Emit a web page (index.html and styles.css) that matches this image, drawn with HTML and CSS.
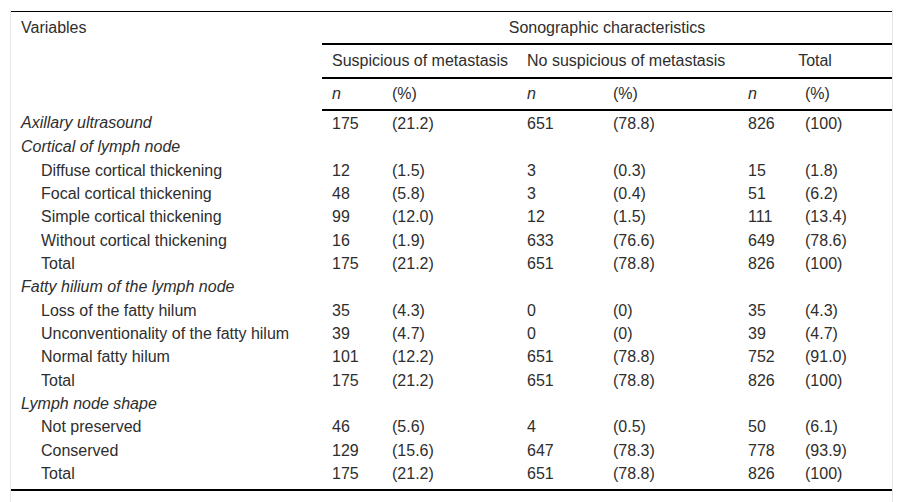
FILE: index.html
```html
<!DOCTYPE html>
<html>
<head>
<meta charset="utf-8">
<link rel="stylesheet" href="styles.css">
</head>
<body>
<div class="wrap">
<table class="tbl">
<colgroup>
<col class="c1"><col class="c2"><col class="c3"><col class="c4"><col class="c5"><col class="c6"><col class="c7">
</colgroup>
<thead>
<tr class="h1">
<th rowspan="3" class="var">Variables</th>
<th colspan="6" class="center line">Sonographic characteristics</th>
</tr>
<tr class="h2">
<th colspan="2" class="line">Suspicious of metastasis</th>
<th colspan="2" class="line">No suspicious of metastasis</th>
<th colspan="2" class="center line">Total</th>
</tr>
<tr class="h3">
<th class="it">n</th><th>(%)</th>
<th class="it">n</th><th>(%)</th>
<th class="it">n</th><th>(%)</th>
</tr>
</thead>
<tbody>
<tr class="first"><td class="it">Axillary ultrasound</td><td>175</td><td>(21.2)</td><td>651</td><td>(78.8)</td><td>826</td><td>(100)</td></tr>
<tr><td class="it">Cortical of lymph node</td><td></td><td></td><td></td><td></td><td></td><td></td></tr>
<tr><td class="sub">Diffuse cortical thickening</td><td>12</td><td>(1.5)</td><td>3</td><td>(0.3)</td><td>15</td><td>(1.8)</td></tr>
<tr><td class="sub">Focal cortical thickening</td><td>48</td><td>(5.8)</td><td>3</td><td>(0.4)</td><td>51</td><td>(6.2)</td></tr>
<tr><td class="sub">Simple cortical thickening</td><td>99</td><td>(12.0)</td><td>12</td><td>(1.5)</td><td>111</td><td>(13.4)</td></tr>
<tr><td class="sub">Without cortical thickening</td><td>16</td><td>(1.9)</td><td>633</td><td>(76.6)</td><td>649</td><td>(78.6)</td></tr>
<tr><td class="sub">Total</td><td>175</td><td>(21.2)</td><td>651</td><td>(78.8)</td><td>826</td><td>(100)</td></tr>
<tr><td class="it">Fatty hilium of the lymph node</td><td></td><td></td><td></td><td></td><td></td><td></td></tr>
<tr><td class="sub">Loss of the fatty hilum</td><td>35</td><td>(4.3)</td><td>0</td><td>(0)</td><td>35</td><td>(4.3)</td></tr>
<tr><td class="sub">Unconventionality of the fatty hilum</td><td>39</td><td>(4.7)</td><td>0</td><td>(0)</td><td>39</td><td>(4.7)</td></tr>
<tr><td class="sub">Normal fatty hilum</td><td>101</td><td>(12.2)</td><td>651</td><td>(78.8)</td><td>752</td><td>(91.0)</td></tr>
<tr><td class="sub">Total</td><td>175</td><td>(21.2)</td><td>651</td><td>(78.8)</td><td>826</td><td>(100)</td></tr>
<tr><td class="it">Lymph node shape</td><td></td><td></td><td></td><td></td><td></td><td></td></tr>
<tr><td class="sub">Not preserved</td><td>46</td><td>(5.6)</td><td>4</td><td>(0.5)</td><td>50</td><td>(6.1)</td></tr>
<tr><td class="sub">Conserved</td><td>129</td><td>(15.6)</td><td>647</td><td>(78.3)</td><td>778</td><td>(93.9)</td></tr>
<tr class="last"><td class="sub">Total</td><td>175</td><td>(21.2)</td><td>651</td><td>(78.8)</td><td>826</td><td>(100)</td></tr>
</tbody>
</table>
</div>
</body>
</html>
```

FILE: styles.css
```css
html, body {
  margin: 0;
  padding: 0;
  background: #fff;
  overflow: hidden;
}
body {
  font-family: "Liberation Sans", Arial, sans-serif;
  font-size: 16px;
  color: #2e2e2e;
}
.wrap {
  margin: 10px 0 0 10px;
  width: 881px;
  height: 500px;
  border-left: 1px solid #e6e6e6;
  border-right: 1px solid #e6e6e6;
  padding-top: 1px;
}
.tbl {
  width: 881px;
  border-collapse: collapse;
  table-layout: fixed;
  border-top: 1px solid #000;
  border-bottom: 2px solid #000;
}
.c1 { width: 311px; }
.c2 { width: 60px; }
.c3 { width: 135px; }
.c4 { width: 86px; }
.c5 { width: 135px; }
.c6 { width: 57px; }
.c7 { width: 97px; }
th, td {
  text-align: left;
  font-weight: normal;
  padding: 2px 0 2px 10px;
  line-height: 19.33px;
  vertical-align: top;
  white-space: nowrap;
}
thead th {
  padding-top: 6px;
  padding-bottom: 6px;
}
tr.h2 th {
  padding-top: 6px;
}
tr.h3 th {
  padding-top: 5px;
  padding-bottom: 6px;
  border-bottom: 2px solid #000;
}
th.var {
  padding-top: 6px;
}
th.center {
  text-align: center;
  padding-left: 0;
}
th.line {
  border-bottom: 2px solid #000;
}
.it {
  font-style: italic;
}
td.sub {
  padding-left: 30px;
}
tr.first td {
  padding-top: 3px;
}
tr.last td {
  padding-bottom: 6px;
}
```
